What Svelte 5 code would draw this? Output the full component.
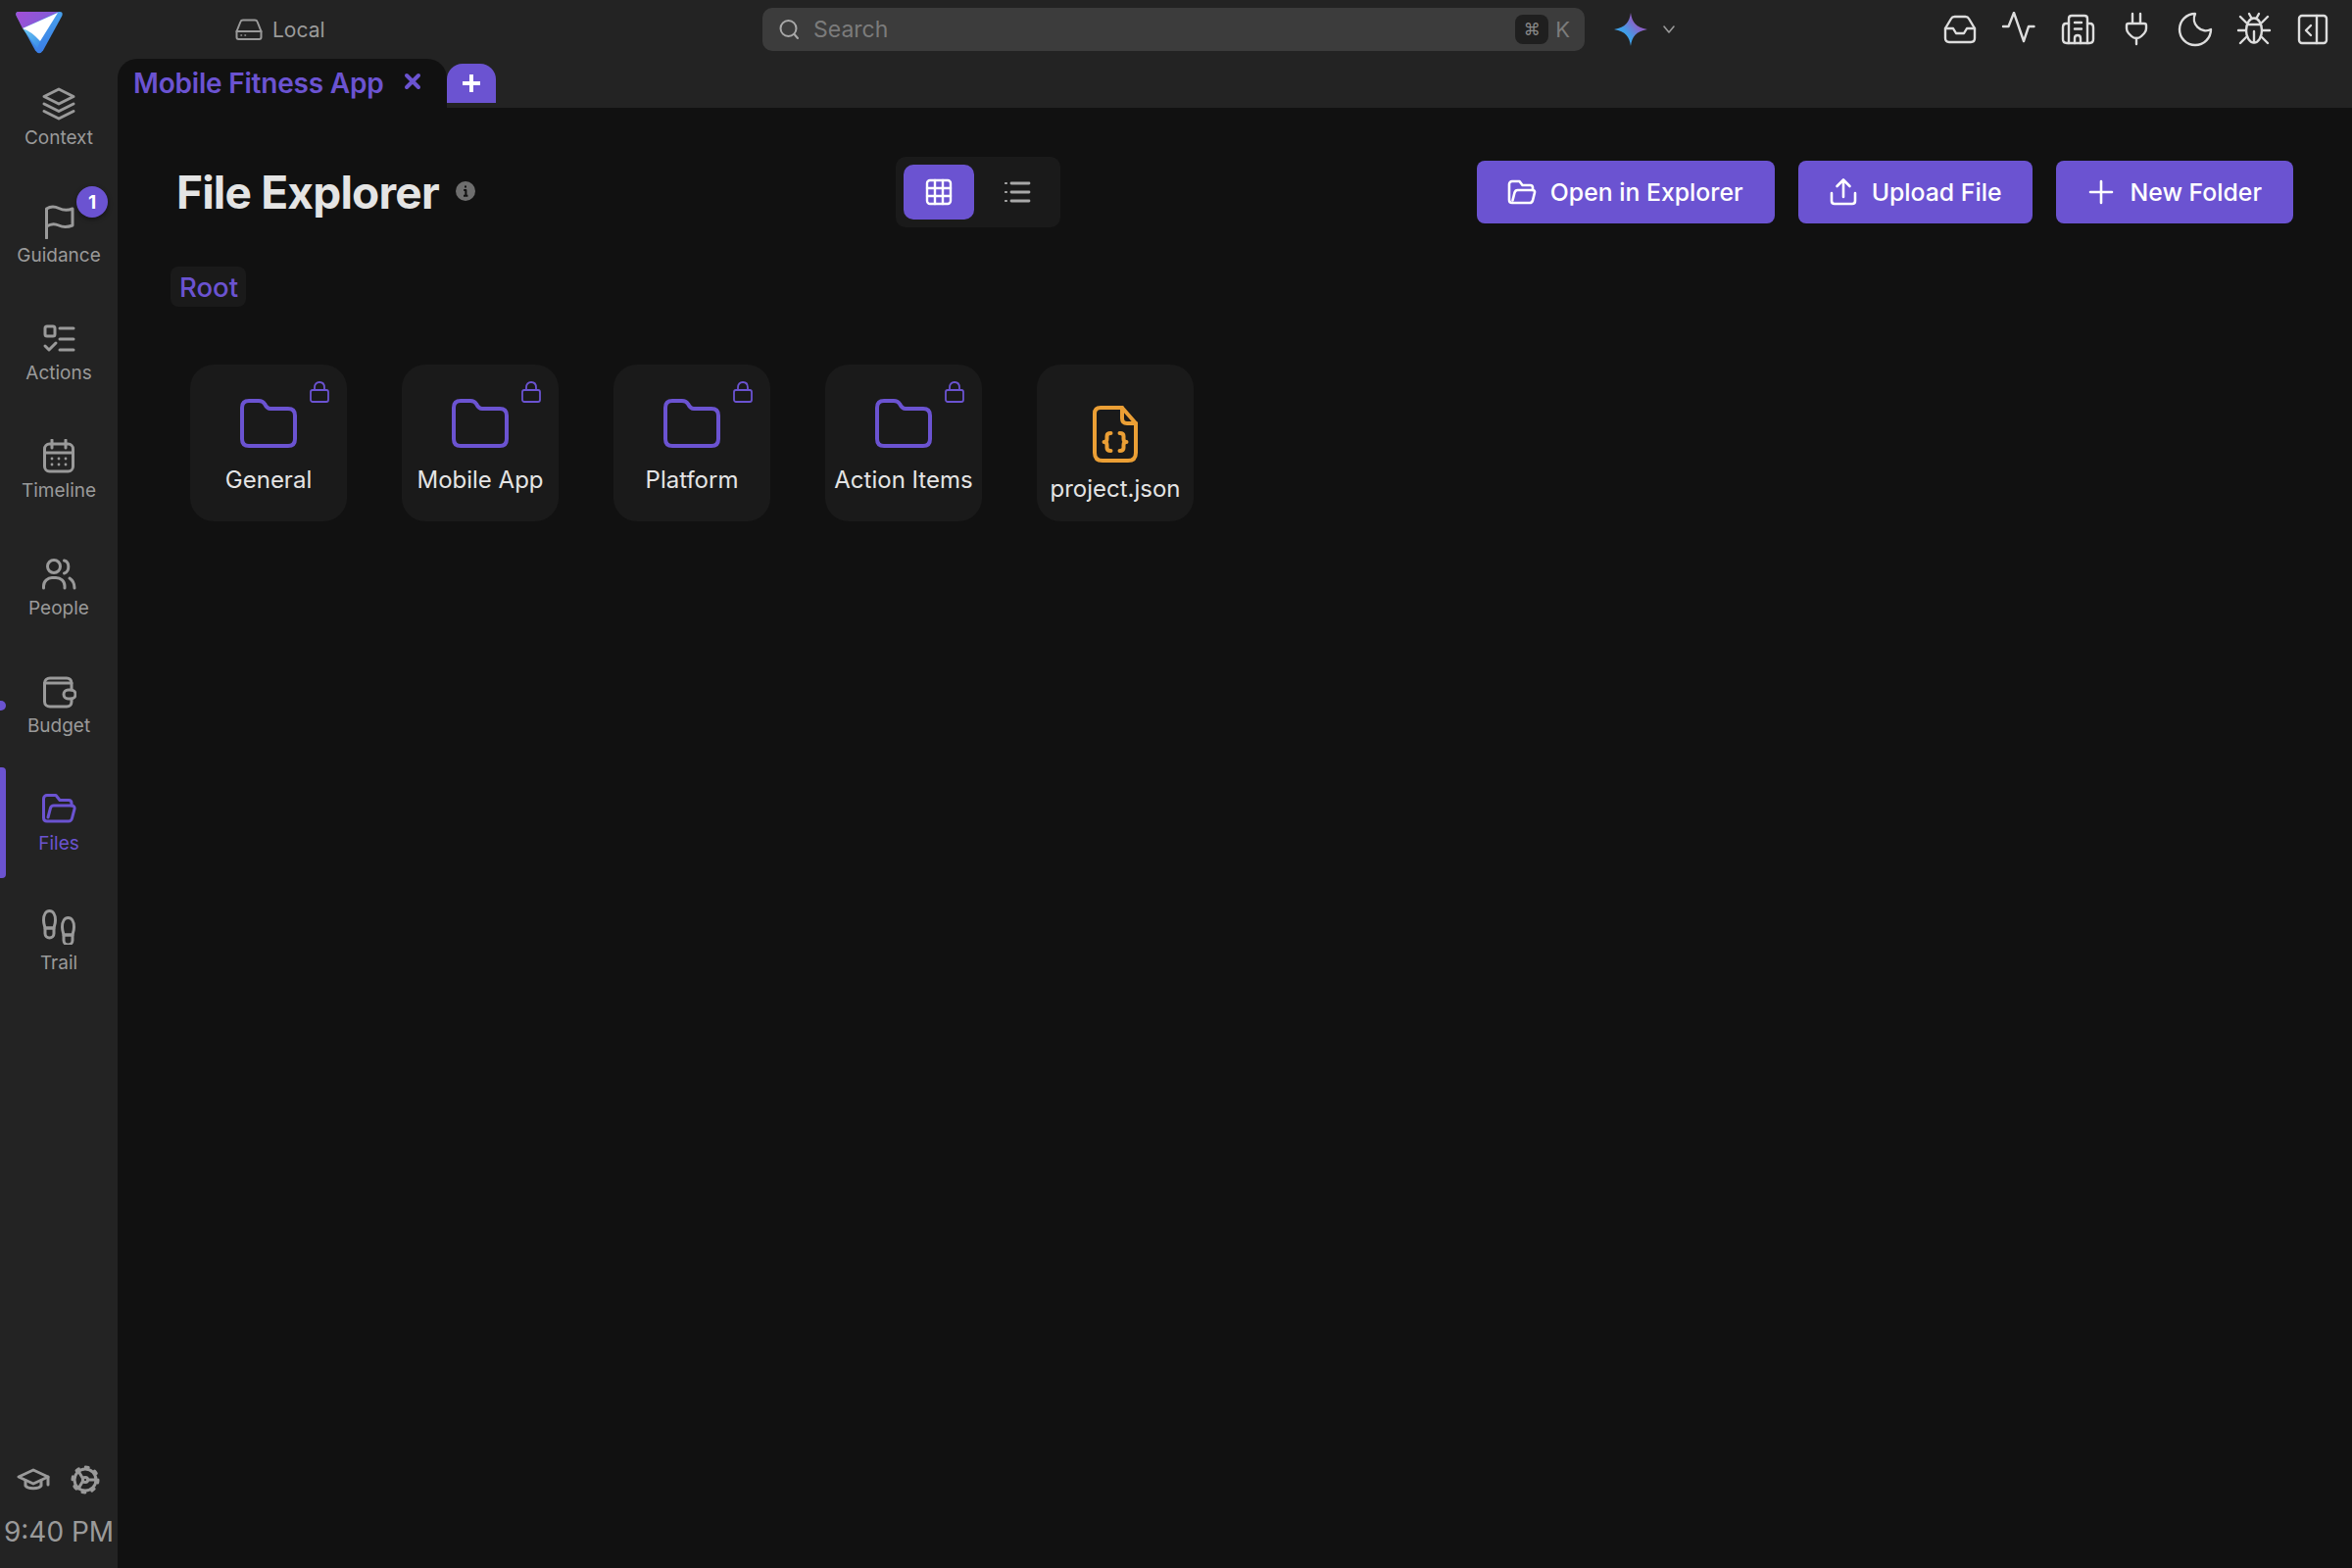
<script>
    const navItems = [
        { label: "Context", icon: "context" },
        { label: "Guidance", icon: "flag", badge: 1 },
        { label: "Actions", icon: "actions" },
        { label: "Timeline", icon: "timeline" },
        { label: "People", icon: "people" },
        { label: "Budget", icon: "wallet", dot: true },
        { label: "Files", icon: "files", active: true },
        { label: "Trail", icon: "trail" },
    ];

    const entries = [
        { name: "General", locked: true },
        { name: "Mobile App", locked: true },
        { name: "Platform", locked: true },
        { name: "Action Items", locked: true },
        { name: "project.json", file: true },
    ];
</script>

<div class="app">
    <aside class="sidebar">
        <div class="logo">
            <svg width="48" height="44" viewBox="0 0 48 44">
                <defs>
                    <linearGradient id="logoBase" x1="0" y1="0" x2="0.2" y2="1">
                        <stop offset="0" stop-color="#4aa8ee" />
                        <stop offset="1" stop-color="#3b7fe6" />
                    </linearGradient>
                    <linearGradient id="logoTop" x1="0" y1="0" x2="1" y2="0.3">
                        <stop offset="0" stop-color="#a24ed6" />
                        <stop offset="1" stop-color="#7d5ed8" />
                    </linearGradient>
                    <linearGradient id="logoWedge" x1="0" y1="0" x2="0.7" y2="1">
                        <stop offset="0" stop-color="#6ccbf2" />
                        <stop offset="1" stop-color="#3f92ea" />
                    </linearGradient>
                </defs>
                <path d="M3 1H45Q48.5 1 47.4 5L28 40.5Q24 46 20 40.5L0.6 5Q-0.5 1 3 1Z" fill="url(#logoBase)" />
                <path d="M3 1H44L7 18L0.6 5Q-0.5 1 3 1Z" fill="url(#logoTop)" />
                <path d="M7 18Q16 21 25 31L22 38Z" fill="url(#logoWedge)" />
                <path d="M43 2L25 31Q16 21 7 18Z" fill="#fff" />
            </svg>
        </div>
        <nav>
            {#each navItems as item}
                <div class="nav-item" class:active={item.active} class:low-label={item.icon === "trail"}>
                    {#if item.active}<span class="indicator"></span>{/if}
                    {#if item.dot}<span class="edge-dot"></span>{/if}
                    {#if item.badge}<span class="badge">{item.badge}</span>{/if}
                    <svg class="nav-icon" width="36" height="36" viewBox="0 0 36 36">
                        {#if item.icon === "context"}
                            <path d="M18 3L33 10.5L18 18L3 10.5Z" />
                            <path d="M3 18L18 25.5L33 18" />
                            <path d="M3 25.5L18 33L33 25.5" />
                        {:else if item.icon === "flag"}
                            <path d="M5.5 35V5C10 2 14 2.5 18 4.5S27 7 32 5V22C27 24 22 24 18 22S10 20 5.5 23" />
                        {:else if item.icon === "actions"}
                            <g transform="translate(0 -1)">
                                <rect x="4" y="6" width="10" height="10" rx="2" />
                                <path d="M19 8H33M19 19H33M19 30H33" />
                                <path d="M4 26L8 30L15 23" />
                            </g>
                        {:else if item.icon === "timeline"}
                            <rect x="3.5" y="5" width="29" height="28" rx="5" />
                            <path d="M3.5 14H32.5M11 1V9M25 1V9" />
                            {#each [11, 18, 25] as cx}
                                <circle class="solid" {cx} cy="20" r="1.4" />
                                <circle class="solid" {cx} cy="26" r="1.4" />
                            {/each}
                        {:else if item.icon === "people"}
                            <circle cx="13" cy="10" r="6.5" />
                            <path d="M2.5 32V30C2.5 25 7 21.5 11 21.5H15C20 21.5 24 25 24 30V32" />
                            <path d="M23.5 4C29 5 29.5 15 23.5 17" />
                            <path d="M29 22C32 24 34 27 34 32" />
                        {:else if item.icon === "wallet"}
                            <path d="M31 16V9C31 6 29 4 26 4H9C6 4 3.5 6 3.5 9V28C3.5 31 6 33 9 33H26C29 33 31 31 31 28V25" />
                            <path d="M3.5 9H31" />
                            <rect x="23" y="16" width="12" height="9" rx="4.5" />
                        {:else if item.icon === "files"}
                            <g transform="translate(0 -2)">
                                <path d="M6 32H28C30 32 31 31 31.5 29L34 19.5C34.5 17.5 33 16 31 16V13.5C31 11.5 30 10.5 28 10.5H19L15 5.5H6C4 5.5 2.5 7 2.5 9V28.5C2.5 31 4 32 6 32Z" />
                                <path d="M7 28L9.5 18.5C10 16.8 11 16 13 16H31" />
                            </g>
                        {:else if item.icon === "trail"}
                            <g>
                                <path d="M2.5 11C2.5 5 5 1.5 8.5 1.5S14.5 5 14.5 11C14.5 15 13 18 13 19H4C4 18 2.5 15 2.5 11Z" />
                                <path d="M4 19H13V24.5A4.5 4.5 0 0 1 4 24.5Z" />
                            </g>
                            <g transform="translate(19 7)">
                                <path d="M2.5 11C2.5 5 5 1.5 8.5 1.5S14.5 5 14.5 11C14.5 15 13 18 13 19H4C4 18 2.5 15 2.5 11Z" />
                                <path d="M4 19H13V24.5A4.5 4.5 0 0 1 4 24.5Z" />
                            </g>
                        {/if}
                    </svg>
                    <span class="nav-label">{item.label}</span>
                </div>
            {/each}
        </nav>
        <div class="sidebar-foot">
            <div class="foot-icons">
                <svg class="nav-icon" width="34" height="34" viewBox="0 0 34 34">
                    <path d="M2 14L17 7L32 14L17 21Z" />
                    <path d="M9 17.5V23C11 26.5 23 26.5 25 23V17.5" />
                    <path d="M32 14V22" />
                </svg>
                <svg class="nav-icon" width="34" height="34" viewBox="0 0 34 34">
                    <circle cx="17" cy="17" r="11" />
                    <circle class="teeth" cx="17" cy="17" r="13" />
                    <circle cx="17" cy="17" r="2.6" />
                    <path d="M14.6 15.8L10 8M14.6 18.2L10 26M19.6 17H28" />
                </svg>
            </div>
            <div class="clock">9:40 PM</div>
        </div>
    </aside>

    <div class="content">
        <header class="topbar">
            <div class="location">
                <svg class="drive" width="30" height="30" viewBox="0 0 30 30">
                    <path d="M2.5 17L6.5 7Q7 5.5 9 5.5H21Q23 5.5 23.5 7L27.5 17V23Q27.5 25 25.5 25H4.5Q2.5 25 2.5 23Z" />
                    <path d="M2.5 17H27.5" />
                    <path class="dots" d="M7 21H7.5M11 21H11.5" />
                </svg>
                <span>Local</span>
            </div>
            <div class="search">
                <svg class="search-icon" width="24" height="24" viewBox="0 0 24 24">
                    <circle cx="11.5" cy="11" r="8" />
                    <path d="M17.5 17L21 21" />
                </svg>
                <span class="search-text">Search</span>
                <kbd>⌘</kbd>
                <span class="key">K</span>
            </div>
            <svg class="sparkle" width="36" height="36" viewBox="0 0 36 36">
                <defs>
                    <linearGradient id="sparkleFill" x1="0.1" y1="0.8" x2="0.8" y2="0.2">
                        <stop offset="0.35" stop-color="#3f9fe8" />
                        <stop offset="0.8" stop-color="#8a62c8" />
                    </linearGradient>
                </defs>
                <path d="M18 1C19.5 11 23 15.5 35 18C23 20.5 19.5 25 18 35C16.5 25 13 20.5 1 18C13 15.5 16.5 11 18 1Z" fill="url(#sparkleFill)" />
            </svg>
            <svg class="chevron" width="14" height="10" viewBox="0 0 14 10">
                <path d="M2 2L7 8L12 2" />
            </svg>
            <div class="top-icons">
                <svg width="36" height="36" viewBox="0 0 36 36">
                    <path d="M3 17L9 7Q10 5 12.5 5H23.5Q26 5 27 7L33 17V27Q33 31 29 31H7Q3 31 3 27Z" />
                    <path d="M3 17H11L14 22H22L25 17H33" />
                </svg>
                <svg width="36" height="36" viewBox="0 0 36 36">
                    <path d="M2 15H7.5L13 1L23 30L28 15H33.5" />
                </svg>
                <svg width="36" height="36" viewBox="0 0 36 36">
                    <path d="M9 32V7Q9 4 12 4H25Q28 4 28 7V32" />
                    <path d="M9 12H6Q3 12 3 16V28Q3 32 7 32H30Q34 32 34 28V16Q34 12 31 12H28" />
                    <path d="M15 32V27Q15 24 18 24T21 27V32" />
                    <path d="M15 11H22M15 17.5H22" />
                </svg>
                <svg width="36" height="36" viewBox="0 0 36 36">
                    <path d="M14 2V11M22 2V11" />
                    <path d="M10 12H26Q28 12 28 14V17Q28 20 26 22L23 25Q21 27 18 27T13 25L10 22Q8 20 8 17V14Q8 12 10 12Z" />
                    <path d="M18 27V33" />
                </svg>
                <svg width="36" height="36" viewBox="0 0 36 36">
                    <path d="M18 2A16 16 0 1 0 34 18A12 12 0 0 1 18 2Z" />
                </svg>
                <svg width="36" height="36" viewBox="0 0 36 36">
                    <ellipse cx="18" cy="19" rx="8" ry="12.5" />
                    <path d="M11 13H25M18 20V31M13 2L15.5 6.5M23 2L20.5 6.5" />
                    <path d="M10 19H2M26 19H34M10 11L4 5M26 11L32 5M10 26L4 32M26 26L32 32" />
                </svg>
                <svg width="36" height="36" viewBox="0 0 36 36">
                    <rect x="4" y="4" width="28" height="28" rx="3" />
                    <path d="M22 4V32M16 14L11 19L16 24" />
                </svg>
            </div>
        </header>

        <div class="tabs">
            <div class="tab">
                <span>Mobile Fitness App</span>
                <svg width="18" height="18" viewBox="0 0 18 18">
                    <path d="M3 3L15 15M15 3L3 15" />
                </svg>
            </div>
            <div class="tab-add">
                <svg width="22" height="22" viewBox="0 0 22 22">
                    <path d="M11 2V20M2 11H20" />
                </svg>
            </div>
        </div>

        <main>
            <div class="page-head">
                <h1>File Explorer</h1>
                <svg class="info" width="20" height="20" viewBox="0 0 20 20">
                    <circle cx="10" cy="10" r="10" />
                    <path d="M10 4.4V6.4M8.2 9H10.4V14.6M8 14.8H12.4" />
                </svg>
                <div class="view-toggle">
                    <div class="view-btn on">
                        <svg width="28" height="28" viewBox="0 0 28 28">
                            <rect x="2" y="2" width="24" height="24" rx="3" />
                            <path d="M10 2V26M18 2V26M2 10H26M2 18H26" />
                        </svg>
                    </div>
                    <div class="view-btn">
                        <svg width="28" height="28" viewBox="0 0 28 28">
                            <path class="list-lines" d="M8 5H26M8 14H26M8 23H26" />
                            <path class="list-dots" d="M2 5H3M2 14H3M2 23H3" />
                        </svg>
                    </div>
                </div>
                <div class="actions">
                    <button>
                        <svg width="30" height="30" viewBox="0 0 30 30">
                            <path d="M5 26H23C24.5 26 25.5 25 26 23.5L28 15.5C28.4 14 27.3 13 26 13V10.5C26 9 25 8 23.5 8H15.5L12.5 4H5C3.4 4 2 5.4 2 7V23C2 25 3.4 26 5 26Z" />
                            <path d="M5.5 23.5L7.5 15.5C8 14 9 13 10.5 13H26" />
                        </svg>
                        Open in Explorer
                    </button>
                    <button>
                        <svg width="30" height="30" viewBox="0 0 30 30">
                            <path d="M15 20V3M8.5 9L15 2.5L21.5 9" />
                            <path d="M3 16V24C3 26 4.5 27 6 27H24C25.5 27 27 26 27 24V16" />
                        </svg>
                        Upload File
                    </button>
                    <button>
                        <svg width="30" height="30" viewBox="0 0 30 30">
                            <path d="M15 4V26M4 15H26" />
                        </svg>
                        New Folder
                    </button>
                </div>
            </div>

            <div class="crumb">Root</div>

            <div class="entries">
                {#each entries as entry}
                    <div class="entry" class:file={entry.file}>
                        {#if entry.locked}
                            <svg class="lock" width="20" height="22" viewBox="0 0 20 22">
                                <rect x="1" y="9" width="18" height="12" rx="2" />
                                <path d="M5 9V6.5C5 3 7 1 10 1S15 3 15 6.5V9" />
                            </svg>
                        {/if}
                        {#if entry.file}
                            <svg class="json" width="46" height="58" viewBox="0 0 46 58">
                                <path class="sheet" d="M8 2H30L44 18V48Q44 56 36 56H10Q2 56 2 48V8Q2 2 8 2Z" />
                                <path class="sheet" d="M30 2V13Q30 18 35 18H44" />
                                <path class="brace" d="M18.5 28Q14.5 28 14.5 31V34Q14.5 37 11.5 37Q14.5 37 14.5 40V43Q14.5 46 18.5 46" />
                                <path class="brace" d="M27.5 28Q31.5 28 31.5 31V34Q31.5 37 34.5 37Q31.5 37 31.5 40V43Q31.5 46 27.5 46" />
                            </svg>
                        {:else}
                            <svg class="folder" width="58" height="50" viewBox="0 0 58 50">
                                <path d="M2 9Q2 2 9 2H19Q23 2 25 5Q27.5 10 31 10H49Q56 10 56 17V41Q56 48 49 48H9Q2 48 2 41Z" />
                            </svg>
                        {/if}
                        <span class="entry-name">{entry.name}</span>
                    </div>
                {/each}
            </div>
        </main>
    </div>
</div>

<style>
    :global(body) {
        margin: 0;
        background: #111111;
    }

    .app {
        display: flex;
        width: 2400px;
        height: 1600px;
        overflow: hidden;
        background: #111111;
        font-family: Inter, "Liberation Sans", sans-serif;
    }

    svg {
        display: block;
        fill: none;
        stroke-linecap: round;
        stroke-linejoin: round;
    }

    /* sidebar */
    .sidebar {
        display: flex;
        flex-direction: column;
        flex: 0 0 120px;
        background: #232323;
    }

    .logo {
        height: 60px;
        padding: 11px 0 0 16px;
        box-sizing: border-box;
    }

    nav {
        display: flex;
        flex-direction: column;
    }

    .nav-item {
        position: relative;
        display: flex;
        flex-direction: column;
        align-items: center;
        height: 120px;
        padding-top: 28px;
        box-sizing: border-box;
        color: #9a9a9a;
    }

    .nav-item.active {
        color: #6b53d1;
    }

    .nav-item.low-label .nav-label {
        margin-top: 7px;
    }

    .nav-icon {
        stroke: currentColor;
        stroke-width: 3;
    }

    .nav-icon .solid {
        fill: currentColor;
        stroke: none;
    }

    .nav-icon .teeth {
        stroke-width: 3;
        stroke-dasharray: 3 7.2;
    }

    .nav-label {
        margin-top: 5px;
        font-size: 19px;
        line-height: 24px;
    }

    .indicator {
        position: absolute;
        left: 0;
        top: 3px;
        bottom: 4px;
        width: 6px;
        border-radius: 0 4px 4px 0;
        background: #6b53d1;
    }

    .edge-dot {
        position: absolute;
        left: -4px;
        top: 55px;
        width: 10px;
        height: 10px;
        border-radius: 50%;
        background: #6b53d1;
    }

    .badge {
        position: absolute;
        left: 78px;
        top: 10px;
        display: flex;
        align-items: center;
        justify-content: center;
        width: 32px;
        height: 32px;
        border-radius: 50%;
        background: #6b53d1;
        box-shadow: 0 2px 5px rgba(0, 0, 0, 0.4);
        color: #fff;
        font-size: 19px;
        font-weight: 700;
    }

    .sidebar-foot {
        margin-top: auto;
        padding-bottom: 20px;
        color: #9a9a9a;
    }

    .foot-icons {
        display: flex;
        gap: 19px;
        padding-left: 17px;
    }

    .clock {
        margin-top: 19px;
        font-size: 28px;
        line-height: 34px;
        text-align: center;
        white-space: nowrap;
    }

    /* top area */
    .content {
        display: flex;
        flex-direction: column;
        flex: 1;
        min-width: 0;
        background: #232323;
    }

    .topbar {
        display: flex;
        align-items: center;
        height: 60px;
    }

    .location {
        display: flex;
        align-items: center;
        gap: 9px;
        width: 658px;
        padding-left: 119px;
        box-sizing: border-box;
        color: #9a9a9a;
        font-size: 21px;
    }

    .drive {
        stroke: #9a9a9a;
        stroke-width: 2;
    }

    .drive .dots {
        stroke-width: 1.6;
    }

    .search {
        display: flex;
        align-items: center;
        width: 839px;
        height: 44px;
        padding: 0 15px 0 15px;
        box-sizing: border-box;
        border-radius: 10px;
        background: #3c3c3c;
        color: #7b7b7b;
        font-size: 23px;
    }

    .search-icon {
        stroke: #a8a8a8;
        stroke-width: 2;
    }

    .search-text {
        margin-left: 13px;
        flex: 1;
    }

    kbd {
        display: flex;
        align-items: center;
        justify-content: center;
        width: 34px;
        height: 30px;
        border-radius: 8px;
        background: #1f1f1f;
        color: #8a8a8a;
        font-family: "DejaVu Sans", sans-serif;
        font-size: 17px;
    }

    .key {
        margin-left: 7px;
        font-size: 22px;
    }

    .sparkle {
        margin-left: 29px;
    }

    .chevron {
        margin-left: 14px;
        stroke: #9a9a9a;
        stroke-width: 1.6;
    }

    .top-icons {
        display: flex;
        gap: 24px;
        margin-left: auto;
        padding-right: 22px;
    }

    .top-icons svg {
        stroke: #dddddd;
        stroke-width: 2.4;
    }

    .tabs {
        display: flex;
        height: 50px;
    }

    .tab {
        display: flex;
        align-items: center;
        width: 336px;
        padding: 0 0 0 16px;
        box-sizing: border-box;
        border-radius: 20px 20px 0 0;
        background: #111111;
        color: #6b53d1;
        font-size: 28px;
        font-weight: 600;
        letter-spacing: -0.2px;
    }

    .tab svg {
        margin-left: 20px;
        margin-top: -4px;
        stroke: #6b53d1;
        stroke-width: 4;
    }

    .tab-add {
        display: flex;
        align-items: center;
        justify-content: center;
        width: 50px;
        height: 40px;
        margin-top: 5px;
        border-radius: 16px 16px 0 0;
        background: #6b53d1;
    }

    .tab-add svg {
        stroke: #fff;
        stroke-width: 4;
        stroke-linecap: butt;
    }

    /* page */
    main {
        flex: 1;
        padding: 50px 60px 0;
        background: #111111;
    }

    .page-head {
        display: flex;
        align-items: center;
        height: 72px;
    }

    h1 {
        width: 268px;
        margin: 0;
        color: #e4e4e4;
        font-size: 46px;
        font-weight: 700;
        letter-spacing: -0.8px;
        white-space: nowrap;
    }

    .info {
        margin: 0 0 2px 17px;
    }

    .info circle {
        fill: #6e6e6e;
    }

    .info path {
        stroke: #111111;
        stroke-width: 2;
        stroke-linecap: butt;
    }

    .view-toggle {
        display: flex;
        gap: 8px;
        box-sizing: border-box;
        width: 168px;
        height: 72px;
        margin-left: 429px;
        padding: 8px;
        border-radius: 10px;
        background: #1a1a1a;
    }

    .view-btn {
        display: flex;
        align-items: center;
        justify-content: center;
        width: 72px;
        height: 56px;
        border-radius: 10px;
    }

    .view-btn.on {
        background: #6b53d1;
    }

    .view-btn svg {
        stroke: #fff;
        stroke-width: 2.4;
    }

    .view-btn .list-lines {
        stroke: #a8a8a8;
        stroke-width: 2.8;
    }

    .view-btn .list-dots {
        stroke: #a8a8a8;
        stroke-width: 2.2;
    }

    .actions {
        display: flex;
        gap: 24px;
        margin-left: auto;
    }

    button {
        display: flex;
        align-items: center;
        gap: 14px;
        height: 64px;
        padding: 0 32px 0 31px;
        border: none;
        border-radius: 8px;
        background: #6b53d1;
        color: #fff;
        font-family: inherit;
        font-size: 24.8px;
        font-weight: 500;
        white-space: nowrap;
    }

    button svg {
        stroke: #fff;
        stroke-width: 2.6;
    }

    .crumb {
        width: fit-content;
        margin: 40px 0 0 -6px;
        padding: 2px 8px 0 9px;
        border-radius: 8px;
        background: #1a1a1a;
        color: #6b53d1;
        font-size: 27.5px;
        font-weight: 500;
        line-height: 39px;
    }

    .entries {
        display: flex;
        gap: 56px;
        margin: 59px 0 0 14px;
    }

    .entry {
        position: relative;
        display: flex;
        flex-direction: column;
        align-items: center;
        box-sizing: border-box;
        width: 160px;
        height: 160px;
        padding-top: 35px;
        border-radius: 24px;
        background: #1a1a1a;
    }

    .entry.file {
        padding-top: 42px;
    }

    .lock {
        position: absolute;
        top: 17px;
        right: 18px;
        stroke: #6b53d1;
        stroke-width: 1.8;
    }

    .folder {
        stroke: #6b53d1;
        stroke-width: 4;
    }

    .json .sheet {
        stroke: #eb9f35;
        stroke-width: 4;
    }

    .json .brace {
        stroke: #eb9f35;
        stroke-width: 4;
    }

    .entry-name {
        margin-top: 18px;
        color: #e4e4e4;
        font-size: 24px;
        line-height: 30px;
        white-space: nowrap;
    }

    .entry.file .entry-name {
        margin-top: 12px;
    }
</style>
